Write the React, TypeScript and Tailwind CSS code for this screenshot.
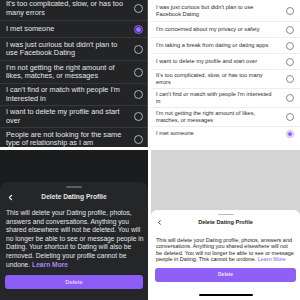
import { ChevronLeft } from "lucide-react";

type Row = { text: string; selected?: boolean; h: string };

const darkRows: Row[] = [
  { text: "It's too complicated, slow, or has too many errors", h: "h-[23px]" },
  { text: "I met someone", selected: true, h: "h-[17px]" },
  { text: "I was just curious but didn't plan to use Facebook Dating", h: "h-[23px]" },
  { text: "I'm not getting the right amount of likes, matches, or messages", h: "h-[23px]" },
  { text: "I can't find or match with people I'm interested in", h: "h-[22px]" },
  { text: "I want to delete my profile and start over", h: "h-[22px]" },
  { text: "People are not looking for the same type of relationship as I am", h: "h-[23px]" },
];

const lightRows: Row[] = [
  { text: "I was just curious but didn't plan to use Facebook Dating", h: "h-[21px]" },
  { text: "I'm concerned about my privacy or safety", h: "h-[16px]" },
  { text: "I'm taking a break from dating or dating apps", h: "h-[16px]" },
  { text: "I want to delete my profile and start over", h: "h-[16px]" },
  { text: "It's too complicated, slow, or has too many errors", h: "h-[19px]" },
  { text: "I can't find or match with people I'm interested in", h: "h-[19px]" },
  { text: "I'm not getting the right amount of likes, matches, or messages", h: "h-[19px]" },
  { text: "I met someone", selected: true, h: "h-[14px]" },
];

function DarkRadio({ selected }: { selected?: boolean }) {
  if (selected) {
    return (
      <div className="flex h-[9px] w-[9px] shrink-0 items-center justify-center rounded-full border border-[#8f63f5] bg-[#3a2a6a]">
        <div className="h-[5px] w-[5px] rounded-full bg-[#9a6cff]" />
      </div>
    );
  }
  return <div className="h-[9px] w-[9px] shrink-0 rounded-full border border-[#b0b3b8]" />;
}

function LightRadio({ selected }: { selected?: boolean }) {
  if (selected) {
    return (
      <div className="flex h-[8px] w-[8px] shrink-0 items-center justify-center rounded-full border border-[#c9b3fb] bg-[#efe8fe]">
        <div className="h-[4px] w-[4px] rounded-full bg-[#8b5cf6]" />
      </div>
    );
  }
  return <div className="h-[8px] w-[8px] shrink-0 rounded-full border border-[#8a8d91]" />;
}

function DarkList() {
  return (
    <div className="h-[147px] overflow-hidden border-r border-[#4a4b4d] bg-[#232426]">
      <div className="-mt-[3px] flex flex-col">
        {darkRows.map((r, i) => (
          <div
            key={i}
            className={`flex items-center justify-between pl-[6px] pr-[4px] ${r.h} ${i > 0 ? "border-t border-[#36373a]" : ""}`}
          >
            <p className="w-[120px] text-[7.3px] leading-[8.5px] text-[#e4e6eb]">{r.text}</p>
            <DarkRadio selected={r.selected} />
          </div>
        ))}
      </div>
    </div>
  );
}

function LightList() {
  return (
    <div className="h-[147px] overflow-hidden bg-white">
      <div className="flex flex-col">
        {lightRows.map((r, i) => (
          <div
            key={i}
            className={`flex items-center justify-between pl-[5px] pr-[6px] ${r.h} ${i > 0 ? "border-t border-[#ebedf0]" : ""}`}
          >
            <p className="w-[116px] text-[5.7px] leading-[7px] text-[#2b2c2e]">{r.text}</p>
            <LightRadio selected={r.selected} />
          </div>
        ))}
      </div>
    </div>
  );
}

function DarkSheet() {
  return (
    <div className="flex h-[150px] flex-col bg-[#1b1c1e]">
      <div className="h-[32px] shrink-0" />
      <div className="flex flex-1 flex-col rounded-t-[8px] bg-[#252628]">
        <div className="mx-auto mt-[4px] h-[1.5px] w-[16px] rounded-full bg-[#5c5e61]" />
        <div className="relative mt-[3.5px] flex h-[12px] items-center justify-center">
          <ChevronLeft className="absolute left-[6px] h-[9px] w-[9px] text-[#e4e6eb]" strokeWidth={3} />
          <span className="text-[6.7px] font-semibold text-[#e4e6eb]">Delete Dating Profile</span>
        </div>
        <p className="mt-[6px] pl-[6px] pr-[2px] text-[6.7px] leading-[8.6px] text-[#e4e6eb]">
          This will delete your Dating profile, photos, answers and conversations. Anything you shared elsewhere
          will not be deleted. You will no longer be able to see or message people in Dating. Your shortcut to
          Dating will also be removed. Deleting your profile cannot be undone.{" "}
          <span className="font-bold text-[#a487f5]">Learn More</span>
        </p>
        <div className="mx-[5px] mt-[6px] flex h-[14px] items-center justify-center rounded-[3px] bg-[#8b5cf6]">
          <span className="text-[5.8px] font-semibold text-[#ddd0fd]">Delete</span>
        </div>
      </div>
    </div>
  );
}

function LightSheet() {
  return (
    <div className="flex h-[150px] flex-col bg-[#d4d4d4]">
      <div className="h-[60px] shrink-0" />
      <div className="flex flex-1 flex-col rounded-t-[6px] bg-white">
        <div className="mx-auto mt-[4px] h-[1px] w-[16px] rounded-full bg-[#b8b9bb]" />
        <div className="relative mt-[2px] flex h-[10px] items-center justify-center">
          <ChevronLeft className="absolute left-[5px] h-[7px] w-[7px] text-[#1c1e21]" strokeWidth={3} />
          <span className="text-[5.6px] font-semibold text-[#1c1e21]">Delete Dating Profile</span>
        </div>
        <p className="mt-[10px] pl-[5px] pr-[5px] text-[5.5px] leading-[6.3px] text-[#1c1e21]">
          This will delete your Dating profile, photos, answers and conversations. Anything you shared elsewhere
          will not be deleted. You will no longer be able to see or message people in Dating. This cannot be
          undone. <span className="text-[#8b5cf6]">Learn More</span>
        </p>
        <div className="mx-[4px] mt-[6px] flex h-[14px] items-center justify-center rounded-[3px] bg-[#8f5ff6]">
          <span className="text-[5px] font-semibold text-[#e9e0fd]">Delete</span>
        </div>
        <div className="mx-auto mt-[12px] h-[2px] w-[54px] rounded-full bg-black" />
      </div>
    </div>
  );
}

export default function App() {
  return (
    <div
      className="grid h-[300px] w-[300px] grid-cols-[148px_149px] grid-rows-[147px_150px] gap-[3px] overflow-hidden bg-white"
      style={{ fontFamily: "'Liberation Sans', Arial, sans-serif" }}
    >
      <DarkList />
      <LightList />
      <DarkSheet />
      <LightSheet />
    </div>
  );
}
